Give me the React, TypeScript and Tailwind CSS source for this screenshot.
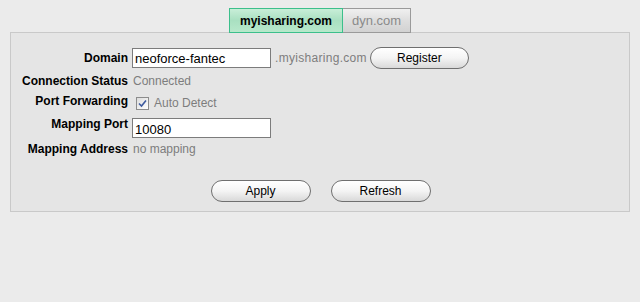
import React from 'react';

const labelCls = 'w-[117px] shrink-0 text-right font-bold text-[12px] leading-[14px] text-black';
const valueCls = 'text-[12px] leading-[14px] text-[#7d7d7d]';
const btnCls =
  'h-[22px] rounded-full border border-[#6f6f6f] bg-gradient-to-b from-white via-[#f4f4f4] to-[#d9d9d9] text-[12px] text-black leading-none';

const Checkbox: React.FC = () => (
  <span className="inline-flex h-[13px] w-[13px] items-center justify-center border border-[#8c8c8c] bg-gradient-to-br from-[#dcdcdc] to-white">
    <svg width="9" height="9" viewBox="0 0 9 9">
      <path d="M1 4.5 L3.5 7 L8 1.5" fill="none" stroke="#3d5a9e" strokeWidth="1.6" />
    </svg>
  </span>
);

export default function App() {
  return (
    <div
      className="min-h-[302px] w-[640px] bg-[#ebebeb]"
      style={{ fontFamily: '"Liberation Sans", Arial, sans-serif' }}
    >
      <div className="flex justify-center pt-[8px]">
        <div className="relative z-10 flex h-[25px]">
          <div className="flex w-[114px] items-center justify-center border border-[#3cbf8b] bg-gradient-to-b from-[#c8eed8] via-[#a9e0c1] to-[#b7e8cb] text-[12px] font-bold text-black">
            myisharing.com
          </div>
          <div className="flex w-[68px] items-center justify-center border border-l-0 border-[#9a9a9a] bg-gradient-to-b from-[#f0f0f0] via-[#dedede] to-[#d2d2d2] text-[13px] text-[#8a8a8a]">
            dyn.com
          </div>
        </div>
      </div>

      <div className="ml-[10px] mt-[-1px] w-[620px] border border-[#c9c9c9] bg-[#e5e5e5] pb-[9px] pt-[14px]">
        <div className="flex h-[22px] items-center">
          <div className={labelCls}>Domain</div>
          <input
            readOnly
            value="neoforce-fantec"
            className="ml-[4px] h-[20px] w-[139px] border border-[#7c7c7c] bg-white px-[2px] text-[13px] text-black outline-none"
          />
          <span className={`${valueCls} ml-[4px] tracking-[0.3px]`}>.myisharing.com</span>
          <button className={`${btnCls} ml-[3px] w-[99px]`}>Register</button>
        </div>

        <div className="mt-[3px] flex h-[18px] items-center">
          <div className={labelCls}>Connection Status</div>
          <span className={`${valueCls} ml-[5px]`}>Connected</span>
        </div>

        <div className="mt-[4px] flex h-[16px] items-start">
          <div className={labelCls}>Port Forwarding</div>
          <div className="ml-[8px] mt-[2px] flex items-center">
            <Checkbox />
            <span className={`${valueCls} ml-[5px]`}>Auto Detect</span>
          </div>
        </div>

        <div className="mt-[7px] flex h-[21px] items-start">
          <div className={labelCls}>Mapping Port</div>
          <input
            readOnly
            value="10080"
            className="ml-[4px] mt-[1px] h-[20px] w-[139px] border border-[#7c7c7c] bg-white px-[2px] pt-[2px] text-[13px] text-black outline-none"
          />
        </div>

        <div className="mt-[4px] flex h-[14px] items-center">
          <div className={labelCls}>Mapping Address</div>
          <span className={`${valueCls} ml-[5px]`}>no mapping</span>
        </div>

        <div className="mt-[24px] flex justify-center gap-[20px] pl-[1px]">
          <button className={`${btnCls} w-[100px]`}>Apply</button>
          <button className={`${btnCls} w-[100px]`}>Refresh</button>
        </div>
      </div>
    </div>
  );
}
